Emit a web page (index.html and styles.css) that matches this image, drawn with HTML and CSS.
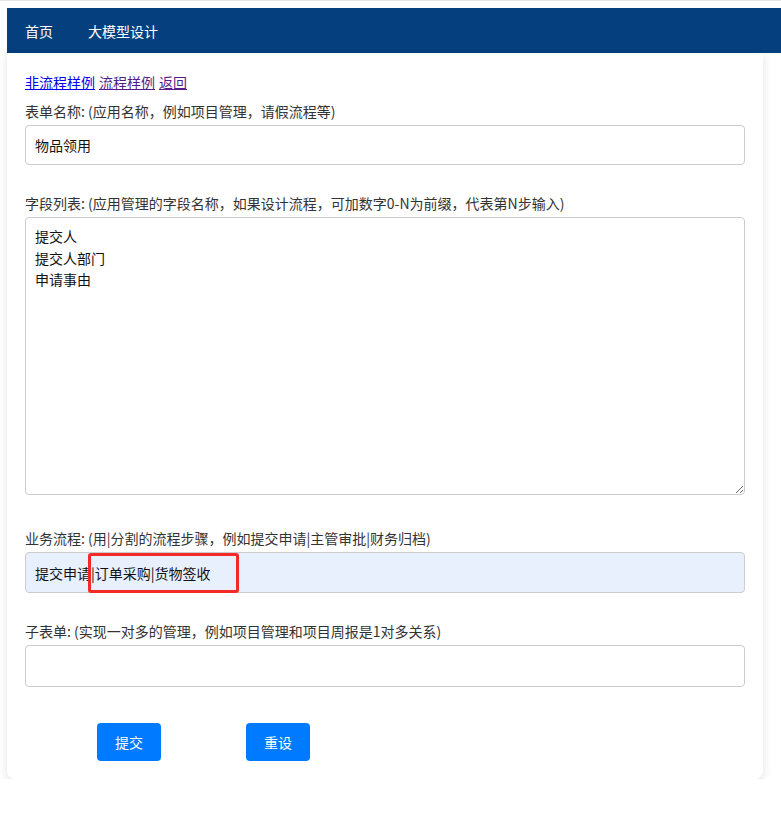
FILE: index.html
```html
<!DOCTYPE html>
<html lang="zh-CN">
<head>
<meta charset="utf-8">
<title>大模型设计</title>
<link rel="stylesheet" href="styles.css">
</head>
<body>
<div class="topline"></div>
<div class="page">
  <nav class="nav">
    <a class="nav-item" href="#">首页</a>
    <a class="nav-item" href="#">大模型设计</a>
  </nav>
  <div class="card">
    <div class="links">
      <a class="link" href="#">非流程样例</a>
      <a class="link visited" href="#">流程样例</a>
      <a class="link visited" href="#">返回</a>
    </div>
    <div class="field">
      <label class="label">表单名称: (应用名称，例如项目管理，请假流程等)</label>
      <input class="input" type="text" value="物品领用">
    </div>
    <div class="field field-area">
      <label class="label">字段列表: (应用管理的字段名称，如果设计流程，可加数字0-N为前缀，代表第N步输入)</label>
      <textarea class="textarea">提交人
提交人部门
申请事由</textarea>
    </div>
    <div class="field">
      <label class="label">业务流程: (用|分割的流程步骤，例如提交申请|主管审批|财务归档)</label>
      <div class="input-wrap">
        <input class="input autofill" type="text" value="提交申请|订单采购|货物签收">
        <span class="mark"></span>
      </div>
    </div>
    <div class="field field-last">
      <label class="label">子表单: (实现一对多的管理，例如项目管理和项目周报是1对多关系)</label>
      <input class="input input-tall" type="text" value="">
    </div>
    <div class="actions">
      <button class="btn" type="button">提交</button>
      <button class="btn" type="button">重设</button>
    </div>
  </div>
</div>
</body>
</html>
```

FILE: styles.css
```css
html, body {
  margin: 0;
  padding: 0;
  background: #fff;
  font-family: "Noto Sans CJK SC", "Microsoft YaHei", "Noto Sans", sans-serif;
  font-size: 14px;
  color: #333;
}
.topline {
  height: 1px;
  background: #e4e4e4;
}
.page {
  padding: 7px 0 0 7px;
}
.nav {
  display: flex;
  align-items: center;
  height: 45px;
  background: #053f7e;
  padding-left: 18px;
  gap: 35px;
}
.nav-item {
  color: #fff;
  text-decoration: none;
  font-size: 14px;
  line-height: 20px;
}
.card {
  width: 756px;
  box-sizing: border-box;
  background: #fff;
  border-radius: 0 0 8px 8px;
  box-shadow: 0 3px 10px rgba(0, 0, 0, 0.12);
  padding: 19px 18px 18px 18px;
}
.links {
  display: flex;
  gap: 4px;
  line-height: 20px;
  margin-bottom: 9px;
}
.link {
  color: #0000ee;
  text-decoration: underline;
}
.link.visited {
  color: #551a8b;
}
.field {
  margin-bottom: 28px;
}
.field-area {
  margin-bottom: 0;
}
.field-last {
  margin-bottom: 0;
}
.label {
  display: block;
  line-height: 20px;
  margin-bottom: 4px;
  color: #333;
}
.input, .textarea {
  display: block;
  box-sizing: border-box;
  width: 720px;
  border: 1px solid #cccccc;
  border-radius: 4px;
  font-family: "Noto Sans CJK SC", "Microsoft YaHei", "Noto Sans", sans-serif;
  font-size: 14px;
  color: #111;
  background: #fff;
  outline: none;
}
.input {
  height: 40px;
  padding: 0 9px;
}
.input.input-tall {
  height: 42px;
}
.textarea {
  height: 278px;
  padding: 8px 9px;
  line-height: 21.5px;
  margin-bottom: 33px;
  resize: vertical;
}
.input-wrap {
  position: relative;
}
.input.autofill {
  background: #e8f0fe;
  height: 41px;
}
.mark {
  position: absolute;
  left: 63px;
  top: 1px;
  width: 151px;
  height: 40px;
  box-sizing: border-box;
  border: 3px solid #f42a2a;
  border-radius: 3px;
}
.actions {
  display: flex;
  gap: 85px;
  padding-left: 72px;
  margin-top: 36px;
}
.btn {
  width: 64px;
  height: 38px;
  border: none;
  border-radius: 4px;
  background: #007bff;
  color: #fff;
  font-family: "Noto Sans CJK SC", "Microsoft YaHei", "Noto Sans", sans-serif;
  font-size: 14px;
  cursor: pointer;
}
```
